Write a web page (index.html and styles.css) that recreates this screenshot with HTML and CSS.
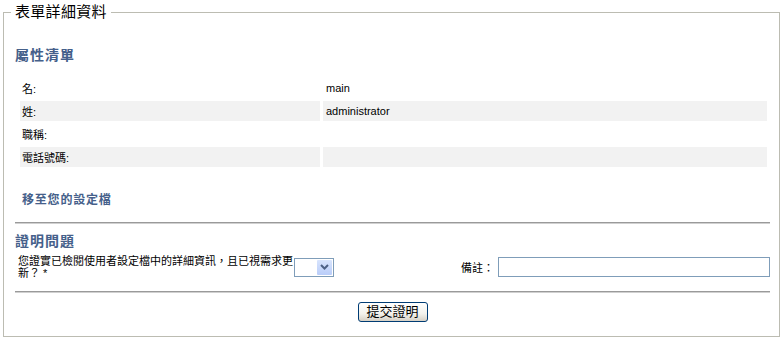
FILE: index.html
```html
<!DOCTYPE html>
<html lang="zh-Hant">
<head>
    <meta charset="UTF-8">
    <meta name="viewport" content="width=device-width, initial-scale=1.0">
    <title>表單詳細資料</title>
    <link rel="stylesheet" href="styles.css">
</head>
<body>
    <fieldset class="form-details">
        <legend>表單詳細資料</legend>

        <h2 class="section-title">屬性清單</h2>
        <table class="attr-table">
            <colgroup>
                <col class="col-label">
                <col>
            </colgroup>
            <tr>
                <td>名:</td>
                <td class="value">main</td>
            </tr>
            <tr class="alt">
                <td>姓:</td>
                <td class="value">administrator</td>
            </tr>
            <tr>
                <td>職稱:</td>
                <td class="value"></td>
            </tr>
            <tr class="alt">
                <td>電話號碼:</td>
                <td class="value"></td>
            </tr>
        </table>

        <a class="profile-link" href="#">移至您的設定檔</a>

        <hr class="divider">

        <h3 class="question-title">證明問題</h3>
        <div class="question-row">
            <label class="question" for="certify">您證實已檢閱使用者設定檔中的詳細資訊，且已視需求更新？ *</label>
            <span class="select-wrap">
                <select id="certify">
                    <option></option>
                    <option>是</option>
                    <option>否</option>
                </select>
                <span class="select-arrow">
                    <svg width="9" height="6" viewBox="0 0 9 6"><path d="M1 1 L4.5 4.5 L8 1" fill="none" stroke="#4d6185" stroke-width="2"/></svg>
                </span>
            </span>
            <label class="note-label" for="note">備註：</label>
            <input type="text" id="note" class="note-input">
        </div>

        <hr class="divider second">

        <div class="actions">
            <button type="button" class="submit-btn">提交證明</button>
        </div>
    </fieldset>
</body>
</html>
```

FILE: styles.css
```css
body {
    font-family: "Liberation Sans", "Noto Sans CJK TC", sans-serif;
    font-size: 11px;
    margin: 0;
    padding: 4px 3px 0;
    color: #000;
    background: #fff;
}
.form-details {
    margin: 0;
    padding: 0 9px 14px 11px;
    border: 1px solid #bcbcb2;
}
.form-details legend {
    font-size: 15px;
    line-height: 16px;
    padding: 0 4px;
    margin-left: -4px;
    letter-spacing: 0.3px;
}
.section-title {
    font-size: 14px;
    line-height: 16px;
    margin: 27px 0 0;
    color: #45608a;
    letter-spacing: 1px;
}
.attr-table {
    margin: 12px 0 0 2px;
    width: 753px;
    border-spacing: 3px;
    table-layout: fixed;
}
.col-label {
    width: 300px;
}
.attr-table td {
    height: 20px;
    padding: 0 2px;
    vertical-align: middle;
}
.attr-table td.value {
    padding-left: 3px;
}
.attr-table tr.alt td {
    background-color: #f2f2f2;
}
.profile-link {
    display: block;
    margin: 23px 0 0 7px;
    font-size: 12px;
    line-height: 14px;
    font-weight: bold;
    color: #45608a;
    text-decoration: none;
    letter-spacing: 0.8px;
}
.divider {
    margin: 15px 0 0;
    height: 0;
    border: none;
    border-top: 1px solid #9a9a9a;
    border-bottom: 1px solid #d0d0d0;
}
.divider.second {
    margin-top: 12px;
}
.question-title {
    font-size: 14px;
    line-height: 16px;
    margin: 9px 0 0;
    color: #45608a;
    letter-spacing: 1px;
}
.question-row {
    display: grid;
    grid-template-columns: 276px 40px 1fr 272px;
    align-items: center;
    padding-left: 3px;
    margin-top: 6px;
}
.question {
    line-height: 12px;
}
.select-wrap {
    position: relative;
    display: block;
    width: 40px;
    height: 19px;
}
.select-wrap select {
    appearance: none;
    width: 40px;
    height: 19px;
    margin: 0;
    border: 1px solid #7f9db9;
    background: #fff;
    border-radius: 0;
    font-size: 11px;
}
.select-arrow {
    position: absolute;
    top: 2px;
    right: 2px;
    width: 15px;
    height: 15px;
    display: flex;
    align-items: center;
    justify-content: center;
    background: linear-gradient(#d8e4fd, #b9cdf9);
    border-radius: 1px;
    pointer-events: none;
}
.note-label {
    text-align: right;
    padding-right: 4px;
    font-size: 11px;
}
.note-input {
    width: 272px;
    height: 20px;
    box-sizing: border-box;
    margin: 0;
    border: 1px solid #7f9db9;
    font-size: 11px;
}
.actions {
    text-align: center;
    margin-top: 9px;
    line-height: 0;
}
.submit-btn {
    width: 70px;
    height: 20px;
    padding: 0;
    font-family: "Liberation Sans", "Noto Sans CJK TC", sans-serif;
    font-size: 13px;
    line-height: 16px;
    color: #000;
    border: 1px solid #003c74;
    border-radius: 3px;
    background: linear-gradient(#ffffff, #f3f2ec 60%, #d6d0c5);
    cursor: pointer;
}
```
